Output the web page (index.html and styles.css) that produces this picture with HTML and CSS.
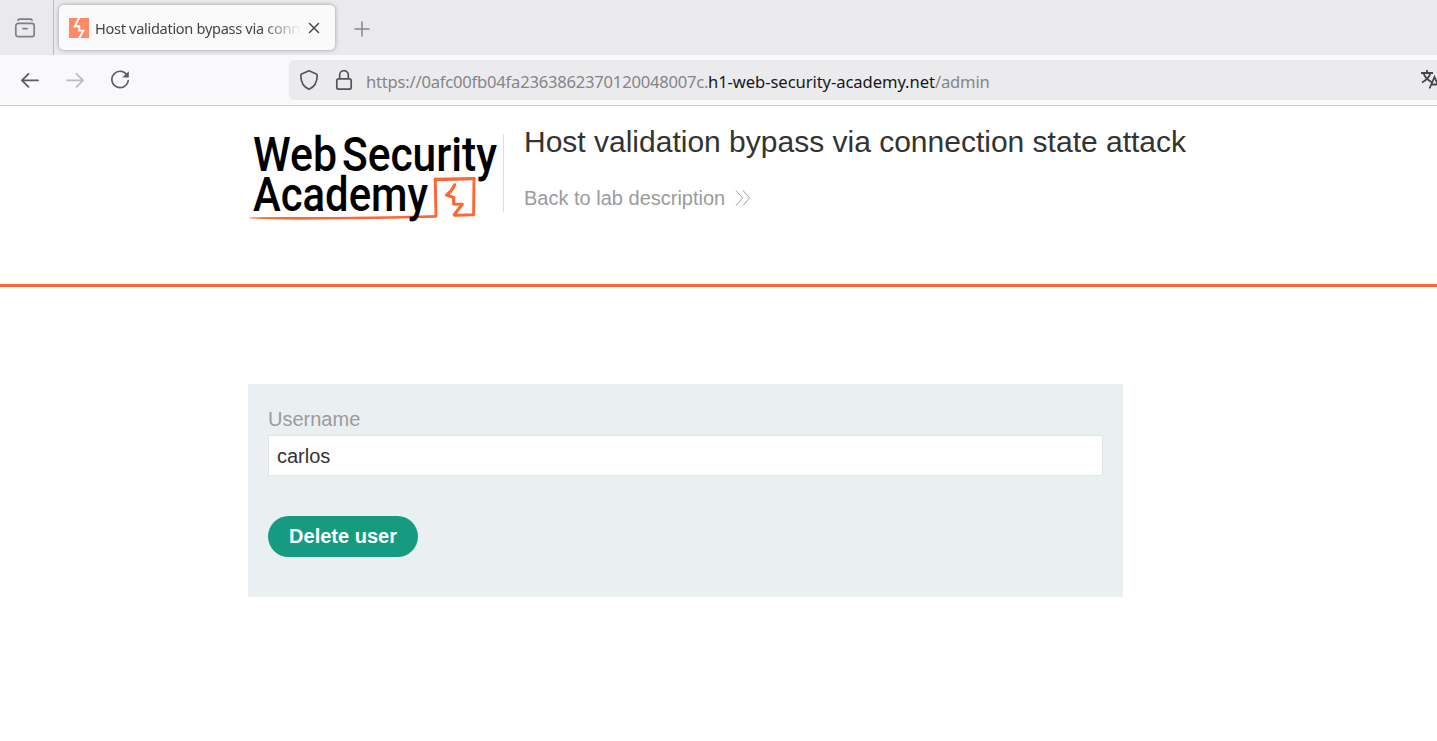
FILE: index.html
```
<!DOCTYPE html>
<html lang="en">
<head>
<meta charset="utf-8">
<title>Host validation bypass via connection state attack</title>
<link rel="stylesheet" href="styles.css">
</head>
<body>
<div class="tabbar">
  <div class="tabview">
    <svg width="22" height="22" viewBox="0 0 22 22" fill="none" stroke="#807f88" stroke-width="1.7" stroke-linecap="round">
      <path d="M4 3.200Q4.500 2.200 5.500 2.200H16.500Q17.500 2.200 18 3.200"/>
      <rect x="1.800" y="6.300" width="18.400" height="13.400" rx="2.500"/>
      <path d="M9 11.700h4"/>
    </svg>
  </div>
  <div class="tab">
    <svg class="favicon" width="20" height="20" viewBox="0 0 20 20">
      <path fill="#ff8a65" d="M0 0H20V20H0Z"/>
      <path fill="none" stroke="#fff" stroke-width="1.900" d="M10.600 -1L5.800 8.200H10.200V12.600H14.400L9.800 21"/>
    </svg>
    <span class="tab-title">Host validation bypass via conn</span>
    <svg class="close" width="12" height="12" viewBox="0 0 12 12" fill="none" stroke="#46454d" stroke-width="1.500" stroke-linecap="round"><path d="M1.500 1.500l9 9M10.500 1.500l-9 9"/></svg>
  </div>
  <svg class="plus" width="16" height="16" viewBox="0 0 16 16" fill="none" stroke="#88878f" stroke-width="1.500" stroke-linecap="round"><path d="M8 1v14M1 8h14"/></svg>
</div>
<div class="navbar">
  <svg class="back" width="20" height="18" viewBox="0 0 20 18" fill="none" stroke="#5b5b66" stroke-width="1.800" stroke-linecap="round" stroke-linejoin="round"><path d="M18 9.300H2M8.500 2.800L1.900 9.300l6.600 6.500"/></svg>
  <svg class="forward" width="20" height="18" viewBox="0 0 20 18" fill="none" stroke="#bcbbc0" stroke-width="1.800" stroke-linecap="round" stroke-linejoin="round"><path d="M2 9.300h16M11.500 2.800l6.600 6.500-6.600 6.500"/></svg>
  <svg class="reload" width="20" height="20" viewBox="0 0 20 20" fill="none" stroke="#5b5b66" stroke-width="1.700" stroke-linecap="round"><path d="M17.500 6A8.200 8.200 0 1 0 18.200 10.500"/><path fill="#5b5b66" stroke="none" d="M18.800 1.200V7.500H12.300Z"/></svg>
  <div class="urlbar">
    <svg class="shield" width="20" height="22" viewBox="0 0 20 22" fill="none" stroke="#55545b" stroke-width="1.700" stroke-linejoin="round"><path d="M10 1.800L17.300 5Q18.200 5.400 18.200 6.400C18.200 13 15 18 10 20.300C5 18 1.800 13 1.800 6.400Q1.800 5.400 2.700 5Z"/></svg>
    <svg class="lock" width="18" height="22" viewBox="0 0 18 22" fill="none" stroke="#55545b" stroke-width="1.700"><rect x="1.800" y="9.800" width="14.400" height="10.400" rx="2"/><path d="M4.700 9.800V6a4.300 4.300 0 0 1 8.600 0v3.800"/></svg>
    <div class="url"><span class="url-sub">https://0afc00fb04fa2363862370120048007c.</span><span class="url-host">h1-web-security-academy.net</span><span class="url-path">/admin</span></div>
    <svg class="translate" width="20" height="22" viewBox="0 0 20 22" fill="none" stroke="#46454d" stroke-width="1.800"><path d="M0 5H12M6 2V5M2.500 5Q4 10.500 10.500 14M9.500 5Q8 10.500 1 14.500M8.500 20.500L13.500 9L18.500 20.500M10.500 16.500h6"/></svg>
  </div>
</div>
<header class="lab-header">
  <svg class="logo" width="255" height="110" viewBox="0 0 255 110">
    <g class="logo-text">
      <text x="5" y="50.500" textLength="84" lengthAdjust="spacingAndGlyphs">Web</text>
      <text x="94" y="50.500" textLength="155" lengthAdjust="spacingAndGlyphs">Security</text>
    </g>
    <g fill="none" stroke="#ff6633" stroke-linejoin="round" stroke-linecap="round">
      <path fill="#ff6633" stroke="none" d="M1 97.700Q10 96.800 50 97Q130 97 188 95V97.800Q130 99.200 70 99.600Q20 100 1 98.200Z"/>
      <path stroke-width="2.900" d="M188 96L187.200 59"/>
      <path stroke-width="3.400" d="M187.500 59.500L226 58.600"/>
      <path stroke-width="2.900" d="M226 58.800L225.600 94.800L207 95.400"/>
      <path stroke-width="3.100" d="M206.600 64.800Q204 71 198.500 75L205.700 77.500V84L214.300 84.200L206.200 94.800"/>
    </g>
    <g class="logo-text">
      <text x="5" y="91" textLength="175" lengthAdjust="spacingAndGlyphs">Academy</text>
    </g>
  </svg>
  <div class="title-box">
    <h1>Host validation bypass via connection state attack</h1>
    <a class="back-link">Back to lab description<svg width="16" height="18" viewBox="0 0 16 18" fill="none" stroke="#a0a0a0" stroke-width="1"><path d="M1 1.500l6.500 7.500L1 16.500M8 1.500l6.500 7.500L8 16.500"/></svg></a>
  </div>
</header>
<main>
  <form class="login-form">
    <label for="user">Username</label>
    <input id="user" type="text" value="carlos">
    <button type="button">Delete user</button>
  </form>
</main>
</body>
</html>
```
FILE: styles.css
```
* { box-sizing: border-box; }
body { margin: 0; height: 741px; overflow: hidden; background: #fff; font-family: "Liberation Sans", Arial, sans-serif; color: #333332; }
svg { display: block; flex: none; }

.tabbar { display: flex; height: 55px; background: #eae9ee; font-family: "Noto Sans", sans-serif; }
.tabview { width: 54px; padding: 17px 0 0 14px; border-right: 1px solid #bcbbc1; }
.tab { display: flex; align-items: center; width: 276px; height: 45px; margin: 5px 0 0 5px; padding-left: 10px; border-radius: 5px; background: #fafafa; box-shadow: 0 0 4px rgba(0, 0, 0, .35); }
.tab-title { width: 204px; margin-left: 6px; overflow: hidden; white-space: nowrap; font-size: 14.6px; line-height: 24px; color: #45444b; letter-spacing: -.32px; mask-image: linear-gradient(to right, #000 165px, transparent 206px); }
.close { margin-left: 9px; }
.plus { margin: 21px 0 0 19px; }

.navbar { display: flex; height: 51px; background: #f9f9fb; border-bottom: 1px solid #ccccce; }
.back { margin: 16px 0 0 20px; }
.forward { margin: 16px 0 0 25px; }
.reload { margin: 15px 0 0 25px; }
.urlbar { display: flex; flex: 1; height: 40px; margin: 5px 0 0 159px; padding-left: 10px; overflow: hidden; background: #ebebed; border-radius: 5px 0 0 5px; }
.shield { margin-top: 9px; }
.lock { margin: 9px 0 0 16px; }
.url { display: flex; width: 1055px; flex: none; margin-left: 13px; white-space: nowrap; font: 16.6px/44px "Noto Sans", sans-serif; color: #858489; }
.url-sub { width: 342px; letter-spacing: -.22px; }
.url-host { width: 227px; color: #18171e; letter-spacing: -.08px; }
.url-path { letter-spacing: -.2px; }
.translate { margin-top: 8px; }

.lab-header { display: flex; height: 181px; padding-left: 248px; border-bottom: 3px solid #ff6633; }
.logo { margin-top: 14px; }
.logo-text { font: 500 48px Roboto, sans-serif; fill: #000; }
.title-box { height: 78px; margin-top: 28px; padding-left: 20px; border-left: 1px solid #dedede; }
h1 { margin: -10px 0 0; font-size: 30px; line-height: 36px; font-weight: 400; white-space: nowrap; }
.back-link { display: flex; align-items: center; gap: 10px; margin-top: 26px; font-size: 20px; line-height: 24px; color: #9b9b9b; }

.login-form { display: flex; flex-direction: column; align-items: flex-start; width: 875px; height: 213px; margin: 97px 0 0 248px; padding: 23px 20px; background: #eaeff2; }
label { font-size: 20px; line-height: 24px; color: #9b9b9b; }
input { width: 835px; height: 41px; margin: 4px 0 0; padding: 1px 8px 0; border: 1px solid #e3e4e4; background: #fff; font: 20px "Liberation Sans", Arial, sans-serif; color: #333332; }
button { width: 150px; height: 41px; margin-top: 40px; padding: 0; border: 0; border-radius: 21px; background: #159b80; font: bold 20px "Liberation Sans", Arial, sans-serif; color: #fff; }
```
